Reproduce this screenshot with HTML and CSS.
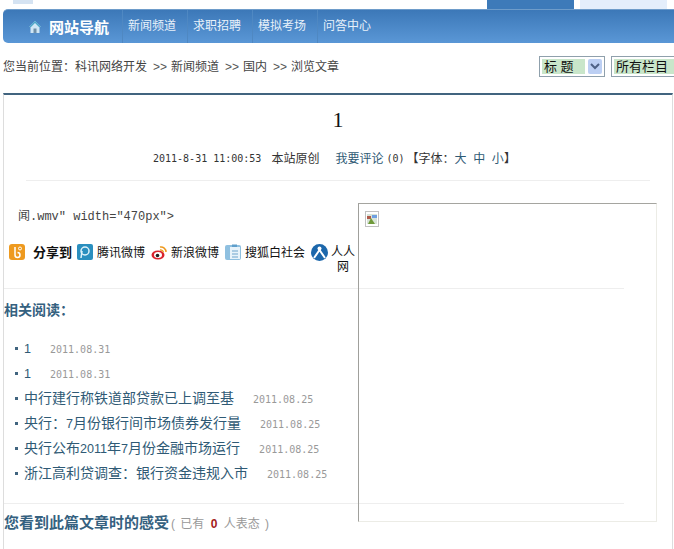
FILE: index.html
```html
<!DOCTYPE html>
<html lang="zh-CN">
<head>
    <meta charset="UTF-8" />
    <title>浏览文章</title>
    <link rel="stylesheet" href="styles.css">
</head>
<body>
<div class="top-strip">
    <div class="top-logo"></div>
    <div class="top-tab tab-blue"></div>
    <div class="top-tab tab-light"></div>
</div>

<div class="nav">
    <div class="nav-home">
        <svg width="14" height="14" viewBox="0 0 14 14">
            <path d="M7 1 L13 7 L11.5 7 L11.5 13 L2.5 13 L2.5 7 L1 7 Z" fill="#cfe6f5"/>
            <path d="M7 1 L13 7 L11 7 L7 3 L3 7 L1 7 Z" fill="#4aa5c8"/>
            <rect x="5.5" y="8.5" width="3" height="4.5" fill="#6f8fa8"/>
        </svg>
        网站导航
    </div>
    <a class="nav-item" href="#">新闻频道</a>
    <a class="nav-item" href="#">求职招聘</a>
    <a class="nav-item" href="#">模拟考场</a>
    <a class="nav-item" href="#">问答中心</a>
</div>

<div class="crumb-row">
    <div class="crumb">
        您当前位置：科讯网络开发<span class="sep">&gt;&gt;</span>新闻频道<span class="sep">&gt;&gt;</span>国内<span class="sep">&gt;&gt;</span>浏览文章
    </div>
    <div class="search-box">
        <div class="fake-select">
            <span class="select-text">标&nbsp;题</span>
            <span class="select-arrow">
                <svg width="10" height="7" viewBox="0 0 10 7"><path d="M1 1 L5 5 L9 1" fill="none" stroke="#4d6185" stroke-width="2"/></svg>
            </span>
        </div>
        <div class="fake-select select-wide">
            <span class="select-text">所有栏目</span>
        </div>
    </div>
</div>

<div class="panel">
    <h1 class="title">1</h1>
    <div class="meta">
        <span class="mono">2011-8-31 11:00:53</span><span class="meta-source">本站原创</span><a class="meta-comment" href="#">我要评论</a><span class="mono">(0)</span><span class="meta-font">【字体：<a href="#">大</a>&nbsp; <a href="#">中</a>&nbsp; <a href="#">小</a>】</span>
    </div>

    <div class="frame-box">
        <div class="broken-img">
            <svg width="10" height="10" viewBox="0 0 10 10">
                <rect width="10" height="10" fill="#d8e4d8"/>
                <rect x="5" y="1" width="5" height="3" fill="#6f9fe0"/>
                <rect x="0" y="2" width="4" height="3" fill="#b05a4a"/>
                <path d="M1 10 L4 4 L8 10 Z" fill="#6f9a3a"/>
            </svg>
        </div>
    </div>

    <div class="body-text">闻.wmv" width="470px"&gt;</div>

    <div class="share">
        <span class="share-ico">
            <svg width="16" height="16" viewBox="0 0 16 16">
                <rect width="16" height="16" rx="3" fill="#ee9a1f"/>
                <path d="M6 3 V11 A2.5 2.5 0 1 0 8.500 8.500" fill="none" stroke="#fff" stroke-width="1.500"/>
                <circle cx="11" cy="4.500" r="1.500" fill="none" stroke="#fff"/>
            </svg>
        </span>
        <b class="share-label">分享到</b>
        <span class="share-item">
            <svg width="16" height="16" viewBox="0 0 16 16">
                <rect width="16" height="16" rx="2" fill="#2a8fbf"/>
                <circle cx="8" cy="7" r="4" fill="none" stroke="#dff2fa" stroke-width="1.500"/>
                <path d="M5 7 L4 14" stroke="#dff2fa" stroke-width="1.500"/>
            </svg>
            腾讯微博
        </span>
        <span class="share-item">
            <svg width="16" height="16" viewBox="0 0 16 16">
                <ellipse cx="7" cy="11" rx="6.500" ry="4.500" fill="#d9232e"/>
                <ellipse cx="7" cy="11" rx="4" ry="3" fill="#fff"/>
                <circle cx="6.500" cy="11.500" r="1.800" fill="#222"/>
                <path d="M9 3 A5 5 0 0 1 15 8" fill="none" stroke="#ee9a1f" stroke-width="1.500"/>
                <path d="M9 6 A3 3 0 0 1 12.500 8.500" fill="none" stroke="#ee9a1f" stroke-width="1.300"/>
            </svg>
            新浪微博
        </span>
        <span class="share-item">
            <svg width="16" height="16" viewBox="0 0 16 16">
                <rect x="0" y="1" width="16" height="15" rx="2" fill="#8fc0e0"/>
                <rect x="5" y="3" width="10" height="12" fill="#e8f3fa"/>
                <path d="M7 0.500 H12 V3 H7 Z" fill="#5f9fcb"/>
                <path d="M7 7 H13 M7 10 H13 M7 13 H13" stroke="#6fa5cc" stroke-width="1.200"/>
            </svg>
            搜狐白社会
        </span>
        <span class="share-item share-last">
            <svg width="17" height="17" viewBox="0 0 17 17">
                <circle cx="8.500" cy="8.500" r="8.500" fill="#1c67ab"/>
                <circle cx="8.500" cy="4.500" r="2" fill="#fff"/>
                <path d="M8.500 6 L3 14 M8.500 6 L14 14" stroke="#fff" stroke-width="2"/>
            </svg>
            <span class="wrap-name">人人<br>网</span>
        </span>
    </div>

    <div class="rule"></div>

    <h3 class="section-head">相关阅读：</h3>
    <ul class="related">
        <li><a href="#"><span class="digit">1</span></a><span class="date">2011.08.31</span></li>
        <li><a href="#"><span class="digit">1</span></a><span class="date">2011.08.31</span></li>
        <li><a href="#">中行建行称铁道部贷款已上调至基</a><span class="date">2011.08.25</span></li>
        <li><a href="#">央行：<span class="digit">7</span>月份银行间市场债券发行量</a><span class="date">2011.08.25</span></li>
        <li><a href="#">央行公布<span class="digit">2011</span>年<span class="digit">7</span>月份金融市场运行</a><span class="date">2011.08.25</span></li>
        <li><a href="#">浙江高利贷调查：银行资金违规入市</a><span class="date">2011.08.25</span></li>
    </ul>

    <div class="rule rule-low"></div>

    <div class="feel">
        <b>您看到此篇文章时的感受</b><span class="feel-note">( 已有 <b class="feel-count">0</b> 人表态 )</span>
    </div>
</div>
</body>
</html>
```

FILE: styles.css
```css
html, body {
    overflow: hidden;
}

body {
    margin: 0;
    height: 549px;
    font-family: "Liberation Sans", "Noto Sans CJK SC", sans-serif;
    font-size: 12px;
    background: #fff;
    color: #333;
}

a {
    text-decoration: none;
    color: #2f5a75;
}

.mono {
    font-family: "DejaVu Sans Mono", monospace;
    font-size: 10px;
}

.top-strip {
    display: flex;
    height: 9px;
}

.top-logo {
    width: 20px;
    height: 4px;
    margin-left: 13px;
    background: #d5e3f2;
}

.top-tab {
    width: 87px;
    height: 9px;
}

.tab-blue {
    margin-left: 454px;
    background: #3d7ab9;
}

.tab-light {
    margin-left: 6px;
    background: #e4eefb;
}

.nav {
    display: flex;
    align-items: center;
    height: 34px;
    margin-left: 3px;
    border-radius: 5px 0 0 5px;
    background: linear-gradient(#3c78b8, #5a97d6);
    border-top: 1px solid #6e9cca;
    box-sizing: border-box;
    color: #fff;
}

.nav-home {
    display: flex;
    align-items: center;
    gap: 7px;
    width: 119px;
    box-sizing: border-box;
    padding-left: 25px;
    font-size: 15px;
    font-weight: bold;
    white-space: nowrap;
}

.nav-item {
    width: 65px;
    box-sizing: border-box;
    padding-left: 5px;
    line-height: 33px;
    color: #e8f1fa;
    border-left: 1px solid #4f88c2;
}

.crumb-row {
    display: flex;
    justify-content: space-between;
    align-items: flex-start;
    height: 50px;
    box-sizing: border-box;
    padding: 13px 0 0 3px;
    line-height: 20px;
    color: #444;
}

.crumb {
    padding-top: 1px;
}

.sep {
    margin: 0 4px 0 6px;
    color: #555;
}

.search-box {
    display: flex;
    gap: 6px;
}

.fake-select {
    display: flex;
    align-items: center;
    gap: 3px;
    width: 66px;
    height: 21px;
    box-sizing: border-box;
    padding: 2px;
    border: 1px solid #8fa0ac;
    color: #111;
    font-size: 13px;
}

.select-text {
    width: 42px;
    padding-left: 2px;
    white-space: nowrap;
    line-height: 15px;
    background: #c9e6ca;
}

.select-wide {
    width: 63px;
    border-right: 0;
    padding-right: 0;
}

.select-wide .select-text {
    width: 64px;
    flex: none;
}

.select-arrow {
    display: flex;
    align-items: center;
    justify-content: center;
    width: 15px;
    height: 15px;
    border-radius: 2px;
    background: #bccff3;
}

.panel {
    position: relative;
    width: 670px;
    height: 456px;
    margin-left: 3px;
    box-sizing: border-box;
    border-top: 2px solid #41647f;
    border-left: 1px solid #ddd;
    border-right: 1px solid #ddd;
}

.title {
    margin: 0;
    padding-top: 12px;
    text-align: center;
    font-family: "Liberation Serif", serif;
    font-size: 22px;
    line-height: 25px;
    font-weight: normal;
    color: #111;
}

.meta {
    display: flex;
    margin: 19px 22px 0;
    padding: 0 0 13px 127px;
    line-height: 16px;
    font-size: 12px;
    color: #333;
    border-bottom: 1px solid #eee;
}

.meta-source {
    margin-left: 10px;
}

.meta-comment {
    margin: 0 3px 0 16px;
}

.meta-font {
    margin-left: 2px;
}

.frame-box {
    position: absolute;
    left: 354px;
    top: 108px;
    width: 299px;
    height: 319px;
    box-sizing: border-box;
    padding: 7px 6px;
    border: 1px solid #ecece6;
    border-top-color: #a5a5a0;
    border-left-color: #a0a09c;
}

.broken-img {
    display: flex;
    align-items: center;
    justify-content: center;
    width: 14px;
    height: 16px;
    box-sizing: border-box;
    border: 1px solid #c0c0c0;
}

.body-text {
    margin-top: 26px;
    padding-left: 14px;
    font-family: "Liberation Mono", "Noto Sans CJK SC", monospace;
    font-size: 12px;
    line-height: 20px;
    color: #444;
}

.share {
    display: flex;
    align-items: flex-start;
    width: 351px;
    height: 44px;
    margin-top: 17px;
    padding-left: 5px;
    box-sizing: border-box;
    color: #111;
}

.share-ico {
    flex: none;
    height: 16px;
}

.share-label {
    margin: 1px 5px 0 8px;
    flex: none;
    font-size: 13px;
    line-height: 16px;
}

.share-item {
    display: flex;
    align-items: flex-start;
    gap: 4px;
    flex: none;
    margin-right: 6px;
    white-space: nowrap;
    line-height: 18px;
}

.share-last {
    margin-right: 0;
    gap: 3px;
}

.wrap-name {
    text-align: center;
    line-height: 15px;
    padding-top: 1px;
}

.rule {
    width: 620px;
    border-top: 1px solid #eee;
}

.section-head {
    margin: 12px 0 0;
    font-size: 14px;
    line-height: 18px;
    color: #356180;
}

.related {
    list-style: none;
    margin: 17px 0 0;
    padding: 0 0 0 10px;
    color: #999;
}

.related li {
    position: relative;
    padding-left: 10px;
    height: 25px;
    line-height: 25px;
    white-space: nowrap;
}

.related li::before {
    content: "";
    position: absolute;
    left: 1px;
    top: 11px;
    width: 3px;
    height: 3px;
    background: #41647f;
}

.related a {
    font-size: 14px;
}

.digit {
    font-size: 12.6px;
}

.date {
    margin-left: 19px;
    font-family: "DejaVu Sans Mono", monospace;
    font-size: 10px;
    color: #999;
}

.rule-low {
    margin-top: 17px;
}

.feel {
    margin-top: 10px;
    font-size: 15px;
    line-height: 18px;
    color: #356180;
}

.feel-note {
    margin-left: 2px;
    font-size: 12px;
    word-spacing: 2px;
    color: #999;
}

.feel-count {
    margin: 0 1px;
    color: #a32020;
}
```
